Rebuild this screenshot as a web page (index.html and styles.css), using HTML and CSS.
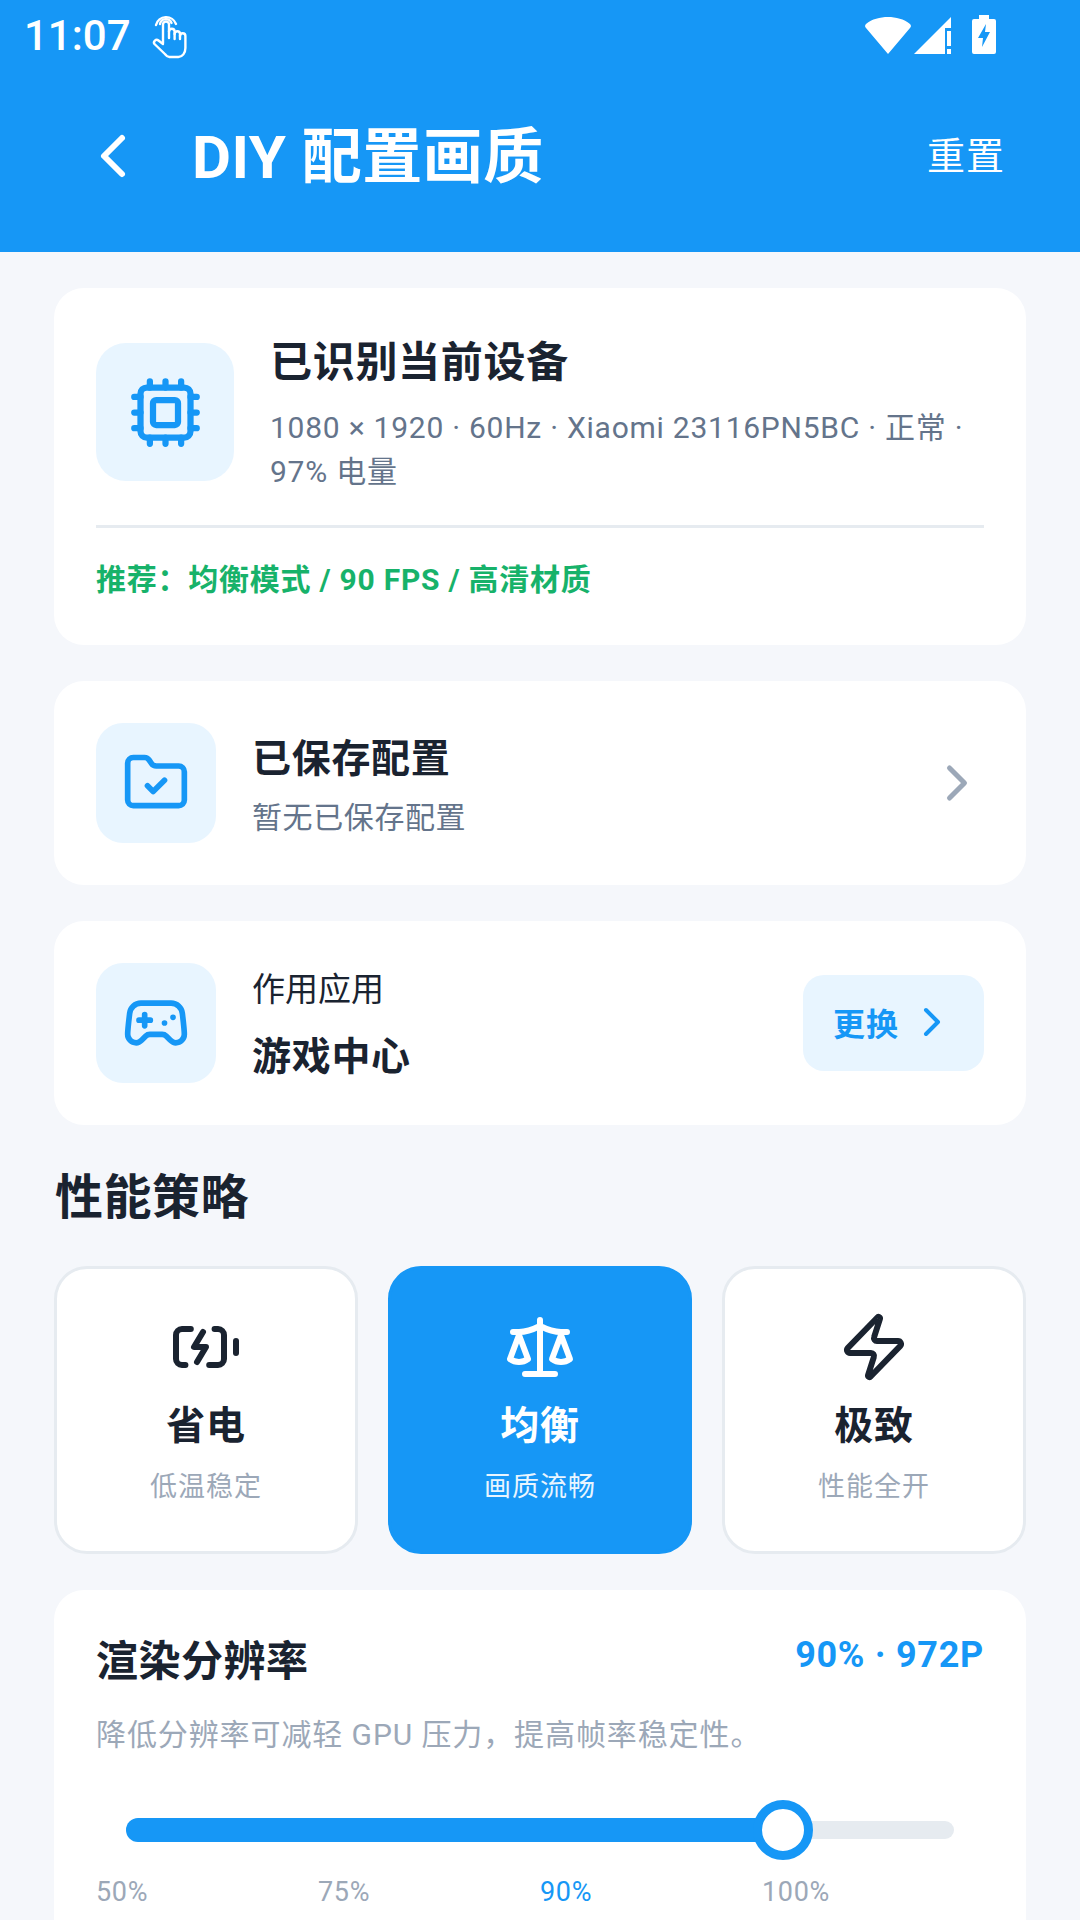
FILE: index.html
```html
<!DOCTYPE html>
<html lang="zh-CN">
<head>
    <meta charset="UTF-8">
    <meta name="viewport" content="width=device-width, initial-scale=1.0">
    <title>DIY 配置画质</title>
    <link rel="stylesheet" href="styles.css">
</head>
<body>
    <header class="app-header">
        <div class="status-bar">
            <span class="status-time">11:07</span>
            <svg class="status-touch" viewBox="0 0 40 50" fill="none" stroke="#fff" stroke-width="2.4" stroke-linecap="round" stroke-linejoin="round">
                <path d="M6 15a10.500 10.500 0 0 1 20-1"/>
                <path d="M10 14a6 6 0 0 1 11.500-1"/>
                <path d="M13 33V14.500a3 3 0 0 1 6 0V28"/>
                <path d="M19 21.500a2.800 2.800 0 0 1 5.600 0V29"/>
                <path d="M24.600 24a2.700 2.700 0 0 1 5.400 0V29"/>
                <path d="M30 26a2.700 2.700 0 0 1 5.400 0v12c0 5-3 9-7 9h-9c-2 0-3-1-4.500-3L4.500 34c-1.800-2.500 1.500-5.500 4-3.500L13 34"/>
            </svg>
            <span class="status-spacer"></span>
            <svg class="status-wifi" viewBox="0 0 46 37"><path d="M23 37 1 11c-1.500-1.500-1-3 0-4C7 2 15 0 23 0s16 2 22 7c1 1 1.500 2.500 0 4z" fill="#fff"/></svg>
            <svg class="status-signal" viewBox="0 0 37 37">
                <path d="M0 37 37 0v11h-6v26z" fill="#fff"/>
                <path d="M33 14h4v15h-4zM33 32h4v5h-4z" fill="#fff"/>
            </svg>
            <svg class="status-battery" viewBox="0 0 24 39">
                <path d="M7 0h10v4h5a2 2 0 0 1 2 2v31a2 2 0 0 1-2 2H2a2 2 0 0 1-2-2V6a2 2 0 0 1 2-2h5z" fill="#fff"/>
                <path d="M14 9 6 23h5l-1 9 8-15h-5z" fill="#1697f6"/>
            </svg>
        </div>
        <div class="title-bar">
            <svg class="icon back-icon" viewBox="0 0 24 24"><path d="m15 18-6-6 6-6"/></svg>
            <h1 class="page-title">DIY 配置画质</h1>
            <span class="reset-link">重置</span>
        </div>
    </header>

    <main class="content">
        <section class="card device-card">
            <div class="device-head">
                <div class="icon-box icon-box-large">
                    <svg class="icon icon-chip" viewBox="0 0 24 24">
                        <path d="M12 20v2M12 2v2M17 20v2M17 2v2M2 12h2M2 17h2M2 7h2M20 12h2M20 17h2M20 7h2M7 20v2M7 2v2"/>
                        <rect x="4" y="4" width="16" height="16" rx="2"/>
                        <rect x="8" y="8" width="8" height="8" rx="1"/>
                    </svg>
                </div>
                <div class="device-text">
                    <div class="device-title">已识别当前设备</div>
                    <div class="device-info">1080 × 1920 · 60Hz · Xiaomi 23116PN5BC · 正常 · 97% 电量</div>
                </div>
            </div>
            <div class="device-recommend">推荐：均衡模式 / 90 FPS / 高清材质</div>
        </section>

        <section class="card row-card">
            <div class="icon-box">
                <svg class="icon icon-row" viewBox="0 0 24 24">
                    <path d="M20 20a2 2 0 0 0 2-2V8a2 2 0 0 0-2-2h-7.900a2 2 0 0 1-1.690-.9L9.600 3.900A2 2 0 0 0 7.930 3H4a2 2 0 0 0-2 2v13a2 2 0 0 0 2 2Z"/>
                    <path d="m9 13 2 2 4-4"/>
                </svg>
            </div>
            <div class="row-text">
                <div class="row-title">已保存配置</div>
                <div class="row-sub">暂无已保存配置</div>
            </div>
            <svg class="icon row-arrow" viewBox="0 0 24 24"><path d="m9 18 6-6-6-6"/></svg>
        </section>

        <section class="card row-card">
            <div class="icon-box">
                <svg class="icon icon-row" viewBox="0 0 24 24">
                    <path d="M6 11h4M8 9v4M15 12h.01M18 10h.01"/>
                    <path d="M17.320 5H6.680a4 4 0 0 0-3.978 3.590c-.006.052-.01.101-.017.152C2.604 9.416 2 14.456 2 16a3 3 0 0 0 3 3c1 0 1.500-.5 2-1l1.414-1.414A2 2 0 0 1 9.828 16h4.344a2 2 0 0 1 1.414.586L17 18c.5.5 1 1 2 1a3 3 0 0 0 3-3c0-1.545-.604-6.584-.685-7.258-.007-.05-.011-.1-.017-.151A4 4 0 0 0 17.320 5z"/>
                </svg>
            </div>
            <div class="row-text">
                <div class="row-label">作用应用</div>
                <div class="row-title">游戏中心</div>
            </div>
            <div class="change-btn">
                <span>更换</span>
                <svg class="icon" viewBox="0 0 24 24"><path d="m9 18 6-6-6-6"/></svg>
            </div>
        </section>

        <h2 class="section-title">性能策略</h2>

        <section class="mode-list">
            <div class="mode-card">
                <svg class="icon" viewBox="0 0 24 24">
                    <path d="m11 7-3 5h4l-3 5"/>
                    <path d="M14.856 6H16a2 2 0 0 1 2 2v8a2 2 0 0 1-2 2h-2.935"/>
                    <path d="M22 14v-4"/>
                    <path d="M5.140 18H4a2 2 0 0 1-2-2V8a2 2 0 0 1 2-2h2.936"/>
                </svg>
                <div class="mode-name">省电</div>
                <div class="mode-sub">低温稳定</div>
            </div>
            <div class="mode-card mode-card-active">
                <svg class="icon" viewBox="0 0 24 24">
                    <path d="m16 16 3-8 3 8c-.87.65-1.920 1-3 1s-2.130-.35-3-1Z"/>
                    <path d="m2 16 3-8 3 8c-.87.65-1.920 1-3 1s-2.130-.35-3-1Z"/>
                    <path d="M7 21h10M12 3v18M3 7h2c2 0 5-1 7-2 2 1 5 2 7 2h2"/>
                </svg>
                <div class="mode-name">均衡</div>
                <div class="mode-sub">画质流畅</div>
            </div>
            <div class="mode-card">
                <svg class="icon" viewBox="0 0 24 24">
                    <path d="M4 14a1 1 0 0 1-.78-1.630l9.900-10.200a.5.5 0 0 1 .86.46l-1.920 6.020A1 1 0 0 0 13 10h7a1 1 0 0 1 .78 1.630l-9.900 10.200a.5.5 0 0 1-.86-.46l1.920-6.020A1 1 0 0 0 11 14z"/>
                </svg>
                <div class="mode-name">极致</div>
                <div class="mode-sub">性能全开</div>
            </div>
        </section>

        <section class="card slider-card">
            <div class="slider-head">
                <div class="slider-title">渲染分辨率</div>
                <div class="slider-value">90% · 972P</div>
            </div>
            <div class="slider-desc">降低分辨率可减轻 GPU 压力，提高帧率稳定性。</div>
            <div class="slider">
                <div class="slider-track">
                    <div class="slider-fill" style="width: 79.3%"></div>
                    <div class="slider-thumb" style="left: 79.3%"></div>
                </div>
            </div>
            <div class="slider-labels">
                <span>50%</span>
                <span>75%</span>
                <span class="slider-label-active">90%</span>
                <span>100%</span>
            </div>
        </section>
    </main>
</body>
</html>
```

FILE: styles.css
```css
* {
    box-sizing: border-box;
}
html, body {
    margin: 0;
    padding: 0;
}
body {
    width: 1080px;
    height: 1920px;
    overflow: hidden;
    background-color: #f5f7fb;
    color: #1a2330;
    font-family: Roboto, "Noto Sans CJK SC", sans-serif;
}
.icon {
    display: block;
    width: 72px;
    height: 72px;
    fill: none;
    stroke: currentColor;
    stroke-width: 2;
    stroke-linecap: round;
    stroke-linejoin: round;
    flex-shrink: 0;
}
.icon-chip {
    width: 75px;
    height: 75px;
}
.icon-row {
    width: 68px;
    height: 68px;
}

/* header */
.app-header {
    height: 252px;
    background-color: #1697f6;
    color: #fff;
}
.status-bar {
    display: flex;
    align-items: center;
    height: 72px;
    padding: 0 84px 0 24px;
}
.status-time {
    font-size: 42px;
    line-height: 72px;
    font-weight: 500;
}
.status-touch {
    width: 40px;
    height: 50px;
    margin: -2px 0 0 19px;
}
.status-spacer {
    flex: 1;
}
.status-wifi {
    width: 46px;
    height: 37px;
    margin-top: -2px;
}
.status-signal {
    width: 37px;
    height: 37px;
    margin: -2px 0 0 3px;
}
.status-battery {
    width: 24px;
    height: 39px;
    margin: -4px 0 0 21px;
}
.title-bar {
    display: flex;
    align-items: center;
    height: 84px;
    margin-top: 42px;
    padding: 0 75px 0 77px;
}
.page-title {
    flex: 1;
    margin: 4px 0 0 43px;
    font-size: 60px;
    line-height: 84px;
    font-weight: 700;
    letter-spacing: 0.5px;
}
.reset-link {
    font-size: 38px;
    line-height: 84px;
    letter-spacing: 1px;
}

/* cards */
.content {
    display: flex;
    flex-direction: column;
    padding: 36px 54px 0;
}
.card {
    background-color: #fff;
    border-radius: 30px;
}
.icon-box {
    display: flex;
    align-items: center;
    justify-content: center;
    width: 120px;
    height: 120px;
    border-radius: 27px;
    background-color: #e8f5ff;
    color: #1697f6;
    flex-shrink: 0;
}
.icon-box-large {
    width: 138px;
    height: 138px;
    border-radius: 30px;
}
.device-card {
    height: 357px;
    padding: 42px;
}
.device-head {
    display: flex;
    align-items: center;
    padding-bottom: 31px;
    border-bottom: 3px solid #e6ebf0;
}
.device-text {
    margin-left: 36px;
}
.device-title {
    font-size: 42px;
    line-height: 65px;
    font-weight: 700;
    letter-spacing: 0.7px;
    margin-bottom: 11px;
}
.device-info {
    font-size: 30px;
    line-height: 44px;
    color: #64748b;
    letter-spacing: 0.75px;
}
.device-recommend {
    margin-top: 29px;
    font-size: 30px;
    line-height: 45px;
    font-weight: 700;
    color: #17b26a;
    letter-spacing: 0.75px;
}
.row-card {
    display: flex;
    align-items: center;
    height: 204px;
    margin-top: 36px;
    padding: 42px;
}
.row-text {
    flex: 1;
    margin-left: 36px;
}
.row-title {
    font-size: 39px;
    line-height: 54px;
    font-weight: 700;
    letter-spacing: 0.7px;
}
.row-title:first-child {
    margin-top: 4px;
}
.row-sub {
    margin-top: 12px;
    font-size: 30px;
    line-height: 40px;
    color: #64748b;
    letter-spacing: 0.6px;
}
.row-label {
    margin: 8px 0 20px;
    font-size: 33px;
    line-height: 40px;
}
.row-arrow {
    width: 60px;
    height: 60px;
    color: #9ca8b8;
    margin-right: -3px;
}
.change-btn {
    display: flex;
    align-items: center;
    justify-content: space-between;
    width: 181px;
    height: 96px;
    padding: 0 30px;
    border-radius: 21px;
    background-color: #e8f5ff;
    color: #1697f6;
    font-size: 32px;
    font-weight: 700;
    letter-spacing: 1px;
}
.change-btn span {
    margin-top: -2px;
}
.change-btn .icon {
    width: 48px;
    height: 48px;
    margin: -2px -2px 0 0;
}
.section-title {
    margin: 37px 0 32px 1px;
    font-size: 48px;
    line-height: 72px;
    font-weight: 700;
    letter-spacing: 0.5px;
}

/* mode buttons */
.mode-list {
    display: grid;
    grid-template-columns: repeat(3, 1fr);
    gap: 30px;
}
.mode-card {
    display: flex;
    flex-direction: column;
    align-items: center;
    height: 288px;
    padding-top: 42px;
    border: 3px solid #e6ebf0;
    border-radius: 33px;
    background-color: #fff;
}
.mode-name {
    margin-top: 18px;
    font-size: 39px;
    line-height: 50px;
    font-weight: 700;
    letter-spacing: 0.8px;
}
.mode-sub {
    margin-top: 17px;
    font-size: 27px;
    line-height: 38px;
    color: #9ca8b8;
    letter-spacing: 1px;
}
.mode-card-active {
    border-color: #1697f6;
    background-color: #1697f6;
    color: #fff;
}
.mode-card-active .mode-sub {
    color: #e8f5ff;
}

/* slider */
.slider-card {
    margin-top: 36px;
    padding: 42px 42px 40px;
}
.slider-head {
    display: flex;
    justify-content: space-between;
    align-items: flex-start;
}
.slider-title {
    font-size: 42px;
    line-height: 60px;
    font-weight: 700;
    letter-spacing: 0.5px;
}
.slider-value {
    font-size: 36px;
    line-height: 46px;
    font-weight: 700;
    color: #1697f6;
    letter-spacing: 0.7px;
}
.slider-desc {
    margin-top: 21px;
    font-size: 30px;
    line-height: 44px;
    color: #9ca8b8;
    letter-spacing: 0.9px;
}
.slider {
    display: flex;
    align-items: center;
    height: 60px;
    margin-top: 43px;
    padding: 0 30px;
}
.slider-track {
    position: relative;
    width: 100%;
    height: 18px;
    border-radius: 9px;
    background-color: #e6ebf0;
}
.slider-fill {
    position: absolute;
    left: 0;
    top: -3px;
    height: 24px;
    border-radius: 12px;
    background-color: #1697f6;
}
.slider-thumb {
    position: absolute;
    top: 50%;
    width: 60px;
    height: 60px;
    margin: -30px 0 0 -30px;
    border: 9px solid #1697f6;
    border-radius: 50%;
    background-color: #fff;
}
.slider-labels {
    display: grid;
    grid-template-columns: repeat(4, 1fr);
    margin-top: 14px;
    font-size: 27px;
    line-height: 36px;
    color: #9ca8b8;
    letter-spacing: 0.7px;
}
.slider-label-active {
    color: #1697f6;
}
```
